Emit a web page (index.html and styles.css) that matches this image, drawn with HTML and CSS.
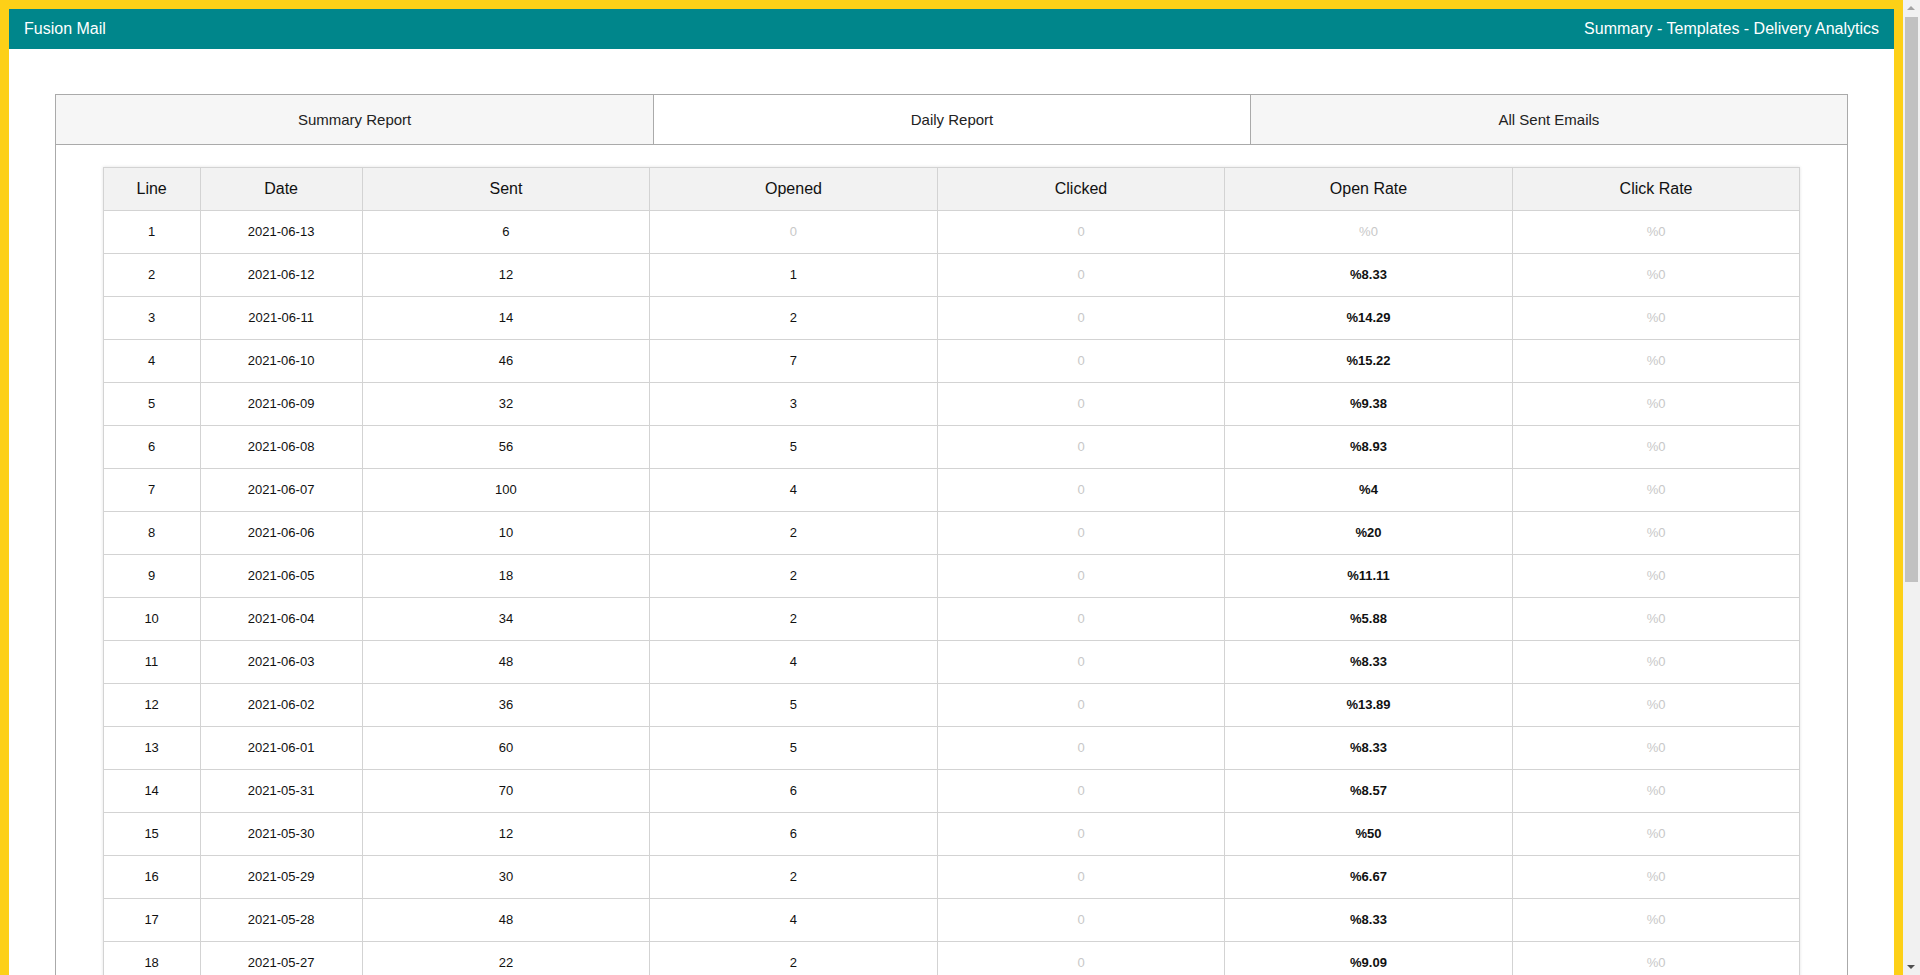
FILE: index.html
```html
<!DOCTYPE html>
<html lang="en">
<head>
    <meta charset="UTF-8">
    <meta name="viewport" content="width=device-width, initial-scale=1.0">
    <title>Fusion Mail - Daily Report</title>
    <link rel="stylesheet" href="styles.css">
</head>
<body>
    <header class="topbar">
        <span class="brand">Fusion Mail</span>
        <nav class="topnav">Summary - Templates - Delivery Analytics</nav>
    </header>

    <div class="panel">
        <div class="tabs">
            <div class="tab">Summary Report</div>
            <div class="tab active">Daily Report</div>
            <div class="tab">All Sent Emails</div>
        </div>
        <div class="panel-body">
            <table class="report">
                <thead>
                    <tr>
                        <th class="col-line">Line</th>
                        <th class="col-date">Date</th>
                        <th>Sent</th>
                        <th>Opened</th>
                        <th>Clicked</th>
                        <th>Open Rate</th>
                        <th>Click Rate</th>
                    </tr>
                </thead>
                <tbody>
                    <tr><td>1</td><td>2021-06-13</td><td>6</td><td class="zero">0</td><td class="zero">0</td><td class="zero">%0</td><td class="zero">%0</td></tr>
                    <tr><td>2</td><td>2021-06-12</td><td>12</td><td>1</td><td class="zero">0</td><td class="rate">%8.33</td><td class="zero">%0</td></tr>
                    <tr><td>3</td><td>2021-06-11</td><td>14</td><td>2</td><td class="zero">0</td><td class="rate">%14.29</td><td class="zero">%0</td></tr>
                    <tr><td>4</td><td>2021-06-10</td><td>46</td><td>7</td><td class="zero">0</td><td class="rate">%15.22</td><td class="zero">%0</td></tr>
                    <tr><td>5</td><td>2021-06-09</td><td>32</td><td>3</td><td class="zero">0</td><td class="rate">%9.38</td><td class="zero">%0</td></tr>
                    <tr><td>6</td><td>2021-06-08</td><td>56</td><td>5</td><td class="zero">0</td><td class="rate">%8.93</td><td class="zero">%0</td></tr>
                    <tr><td>7</td><td>2021-06-07</td><td>100</td><td>4</td><td class="zero">0</td><td class="rate">%4</td><td class="zero">%0</td></tr>
                    <tr><td>8</td><td>2021-06-06</td><td>10</td><td>2</td><td class="zero">0</td><td class="rate">%20</td><td class="zero">%0</td></tr>
                    <tr><td>9</td><td>2021-06-05</td><td>18</td><td>2</td><td class="zero">0</td><td class="rate">%11.11</td><td class="zero">%0</td></tr>
                    <tr><td>10</td><td>2021-06-04</td><td>34</td><td>2</td><td class="zero">0</td><td class="rate">%5.88</td><td class="zero">%0</td></tr>
                    <tr><td>11</td><td>2021-06-03</td><td>48</td><td>4</td><td class="zero">0</td><td class="rate">%8.33</td><td class="zero">%0</td></tr>
                    <tr><td>12</td><td>2021-06-02</td><td>36</td><td>5</td><td class="zero">0</td><td class="rate">%13.89</td><td class="zero">%0</td></tr>
                    <tr><td>13</td><td>2021-06-01</td><td>60</td><td>5</td><td class="zero">0</td><td class="rate">%8.33</td><td class="zero">%0</td></tr>
                    <tr><td>14</td><td>2021-05-31</td><td>70</td><td>6</td><td class="zero">0</td><td class="rate">%8.57</td><td class="zero">%0</td></tr>
                    <tr><td>15</td><td>2021-05-30</td><td>12</td><td>6</td><td class="zero">0</td><td class="rate">%50</td><td class="zero">%0</td></tr>
                    <tr><td>16</td><td>2021-05-29</td><td>30</td><td>2</td><td class="zero">0</td><td class="rate">%6.67</td><td class="zero">%0</td></tr>
                    <tr><td>17</td><td>2021-05-28</td><td>48</td><td>4</td><td class="zero">0</td><td class="rate">%8.33</td><td class="zero">%0</td></tr>
                    <tr><td>18</td><td>2021-05-27</td><td>22</td><td>2</td><td class="zero">0</td><td class="rate">%9.09</td><td class="zero">%0</td></tr>
                    <tr><td>19</td><td>2021-05-26</td><td>40</td><td>3</td><td class="zero">0</td><td class="rate">%7.5</td><td class="zero">%0</td></tr>
                    <tr><td>20</td><td>2021-05-25</td><td>26</td><td>2</td><td class="zero">0</td><td class="rate">%7.69</td><td class="zero">%0</td></tr>
                    <tr><td>21</td><td>2021-05-24</td><td>16</td><td>1</td><td class="zero">0</td><td class="rate">%6.25</td><td class="zero">%0</td></tr>
                    <tr><td>22</td><td>2021-05-23</td><td>52</td><td>4</td><td class="zero">0</td><td class="rate">%7.69</td><td class="zero">%0</td></tr>
                    <tr><td>23</td><td>2021-05-22</td><td>20</td><td>3</td><td class="zero">0</td><td class="rate">%15</td><td class="zero">%0</td></tr>
                    <tr><td>24</td><td>2021-05-21</td><td>44</td><td>5</td><td class="zero">0</td><td class="rate">%11.36</td><td class="zero">%0</td></tr>
                    <tr><td>25</td><td>2021-05-20</td><td>28</td><td>2</td><td class="zero">0</td><td class="rate">%7.14</td><td class="zero">%0</td></tr>
                    <tr><td>26</td><td>2021-05-19</td><td>64</td><td>6</td><td class="zero">0</td><td class="rate">%9.38</td><td class="zero">%0</td></tr>
                    <tr><td>27</td><td>2021-05-18</td><td>18</td><td>1</td><td class="zero">0</td><td class="rate">%5.56</td><td class="zero">%0</td></tr>
                    <tr><td>28</td><td>2021-05-17</td><td>38</td><td>3</td><td class="zero">0</td><td class="rate">%7.89</td><td class="zero">%0</td></tr>
                    <tr><td>29</td><td>2021-05-16</td><td>24</td><td>2</td><td class="zero">0</td><td class="rate">%8.33</td><td class="zero">%0</td></tr>
                    <tr><td>30</td><td>2021-05-15</td><td>50</td><td>4</td><td class="zero">0</td><td class="rate">%8</td><td class="zero">%0</td></tr>
                    <tr><td>31</td><td>2021-05-14</td><td>30</td><td>3</td><td class="zero">0</td><td class="rate">%10</td><td class="zero">%0</td></tr>
                </tbody>
            </table>
        </div>
    </div>

    <!-- classic scrollbar, drawn since the screenshot browser hides its own -->
    <div class="fake-scrollbar" aria-hidden="true">
        <span class="arrow arrow-up"></span>
        <span class="thumb"></span>
        <span class="arrow arrow-down"></span>
    </div>
</body>
</html>
```

FILE: styles.css
```css
html {
    background-color: #fdd017;
    padding-right: 17px;
}
body {
    font-family: "Liberation Sans", Arial, sans-serif;
    margin: 9px;
    padding: 0 0 1px;
    background-color: #fff;
    color: #111;
}
.topbar {
    height: 40px;
    padding: 0 15px;
    background-color: #00868b;
    color: #fff;
    font-size: 16px;
    display: flex;
    justify-content: space-between;
    align-items: center;
}
.panel {
    width: 95%;
    margin: 45px auto 45px;
    border: 1px solid #aaa;
}
.tabs {
    display: grid;
    grid-template-columns: 1fr 1fr 1fr;
    border-bottom: 1px solid #aaa;
    background-color: #f6f6f6;
}
.tab {
    height: 49px;
    display: flex;
    align-items: center;
    justify-content: center;
    font-size: 15px;
    color: #222;
    cursor: pointer;
}
.tab + .tab {
    border-left: 1px solid #aaa;
}
.tab.active {
    background-color: #fff;
}
.panel-body {
    padding: 22px 0;
}
.report {
    width: 94.8%;
    margin: 0 auto;
    table-layout: fixed;
    border-collapse: collapse;
    box-shadow: 0 0 3px rgba(0, 0, 0, 0.12);
}
.report th, .report td {
    border: 1px solid #d3d3d3;
    text-align: center;
}
.report th {
    background-color: #f2f2f2;
    font-weight: normal;
    font-size: 16px;
    line-height: 18px;
    padding: 12px 0;
    color: #111;
}
.report td {
    font-size: 13px;
    line-height: 16px;
    padding: 13px 0;
}
.col-line {
    width: 5.65%;
}
.col-date {
    width: 9.5%;
}
.report td.zero {
    color: #c8c8c8;
}
.report td.rate {
    font-weight: bold;
}

/* scrollbar overlay */
.fake-scrollbar {
    position: fixed;
    top: 0;
    right: 0;
    width: 17px;
    height: 100vh;
    background-color: #f1f1f1;
}
.fake-scrollbar .thumb {
    position: absolute;
    top: 17px;
    left: 2px;
    width: 13px;
    height: 565px;
    background-color: #c1c1c1;
}
.fake-scrollbar .arrow {
    position: absolute;
    left: 4px;
    width: 0;
    height: 0;
    border-left: 4px solid transparent;
    border-right: 4px solid transparent;
}
.fake-scrollbar .arrow-up {
    top: 6px;
    border-bottom: 4px solid #a3a3a3;
}
.fake-scrollbar .arrow-down {
    bottom: 6px;
    border-top: 4px solid #505050;
}
```
